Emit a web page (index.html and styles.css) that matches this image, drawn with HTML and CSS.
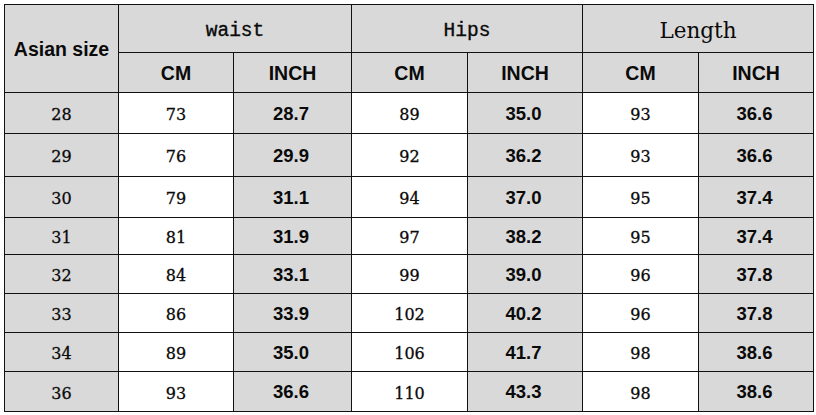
FILE: index.html
```html
<!DOCTYPE html>
<html>
<head>
<meta charset="utf-8">
<link rel="stylesheet" href="styles.css">
</head>
<body>
<table class="size-table">
  <colgroup>
    <col class="c-size"><col class="c1"><col class="c2"><col class="c3"><col class="c4"><col class="c5"><col class="c6">
  </colgroup>
  <thead>
    <tr class="h1">
      <th rowspan="2" class="gray sans">Asian size</th>
      <th colspan="2" class="gray mono">waist</th>
      <th colspan="2" class="gray mono">Hips</th>
      <th colspan="2" class="gray serif-big">Length</th>
    </tr>
    <tr class="h2">
      <th class="gray sans">CM</th><th class="gray sans">INCH</th>
      <th class="gray sans">CM</th><th class="gray sans">INCH</th>
      <th class="gray sans">CM</th><th class="gray sans">INCH</th>
    </tr>
  </thead>
  <tbody>
    <tr><td class="gray num">28</td><td class="num">73</td><td class="gray bold">28.7</td><td class="num">89</td><td class="gray bold">35.0</td><td class="num">93</td><td class="gray bold">36.6</td></tr>
    <tr><td class="gray num">29</td><td class="num">76</td><td class="gray bold">29.9</td><td class="num">92</td><td class="gray bold">36.2</td><td class="num">93</td><td class="gray bold">36.6</td></tr>
    <tr><td class="gray num">30</td><td class="num">79</td><td class="gray bold">31.1</td><td class="num">94</td><td class="gray bold">37.0</td><td class="num">95</td><td class="gray bold">37.4</td></tr>
    <tr><td class="gray num">31</td><td class="num">81</td><td class="gray bold">31.9</td><td class="num">97</td><td class="gray bold">38.2</td><td class="num">95</td><td class="gray bold">37.4</td></tr>
    <tr><td class="gray num">32</td><td class="num">84</td><td class="gray bold">33.1</td><td class="num">99</td><td class="gray bold">39.0</td><td class="num">96</td><td class="gray bold">37.8</td></tr>
    <tr><td class="gray num">33</td><td class="num">86</td><td class="gray bold">33.9</td><td class="num">102</td><td class="gray bold">40.2</td><td class="num">96</td><td class="gray bold">37.8</td></tr>
    <tr><td class="gray num">34</td><td class="num">89</td><td class="gray bold">35.0</td><td class="num">106</td><td class="gray bold">41.7</td><td class="num">98</td><td class="gray bold">38.6</td></tr>
    <tr><td class="gray num">36</td><td class="num">93</td><td class="gray bold">36.6</td><td class="num">110</td><td class="gray bold">43.3</td><td class="num">98</td><td class="gray bold">38.6</td></tr>
  </tbody>
</table>
</body>
</html>
```
FILE: styles.css
```css
html, body {
  margin: 0;
  padding: 0;
  background: #fff;
}
body {
  padding: 4px 0 0 4px;
}
.size-table {
  border-collapse: collapse;
  table-layout: fixed;
  width: 810px;
  color: #0a0a0a;
}
.c-size { width: 114px; }
.c1 { width: 115px; }
.c2 { width: 118px; }
.c3 { width: 116px; }
.c4 { width: 115px; }
.c5 { width: 116px; }
.c6 { width: 115px; }
.size-table th,
.size-table td {
  border: 1px solid #111;
  padding: 0;
  text-align: center;
  vertical-align: middle;
  background: #fff;
  font-weight: normal;
}
.size-table .gray { background: #d9d9d9; }
.h1 { height: 48px; }
.h2 { height: 40px; }
tbody tr { height: 40px; }
tbody tr:nth-child(1) { height: 41px; }
tbody tr:nth-child(2) { height: 43px; }
tbody tr:nth-child(3) { height: 41px; }
tbody tr:nth-child(4) { height: 37px; }
tbody tr:nth-child(5) { height: 39px; }
tbody tr:nth-child(6) { height: 39px; }
tbody tr:nth-child(7) { height: 39px; }
tbody tr:nth-child(8) { height: 40px; }
.size-table .sans {
  font-family: "Liberation Sans", Arial, sans-serif;
  font-weight: bold;
  font-size: 19.5px;
  padding-top: 2px;
}
.size-table .mono {
  font-family: "Liberation Mono", "Courier New", monospace;
  font-size: 19.5px;
  padding-top: 4px;
  -webkit-text-stroke: 0.35px #0a0a0a;
}
.size-table .serif-big {
  font-family: "DejaVu Serif", "Liberation Serif", serif;
  font-size: 21.5px;
  padding-top: 4px;
}
.size-table .num {
  font-family: "DejaVu Serif", "Liberation Serif", serif;
  font-size: 16px;
  padding-top: 3px;
  -webkit-text-stroke: 0.3px #0a0a0a;
}
.size-table .bold {
  font-family: "Liberation Sans", Arial, sans-serif;
  font-weight: bold;
  font-size: 18.5px;
  padding-top: 1px;
  padding-right: 3px;
}
```
